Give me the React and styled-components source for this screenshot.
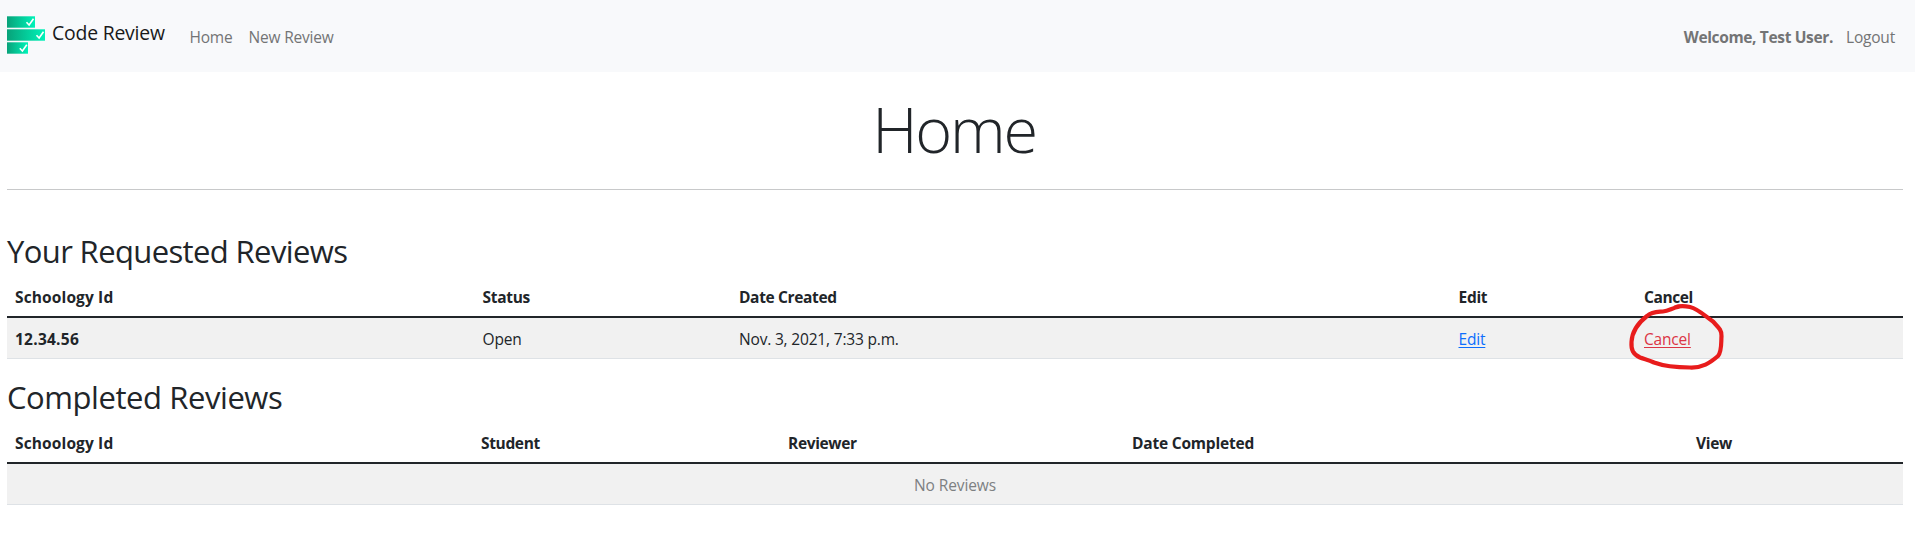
import React from "react";
import styled, { createGlobalStyle } from "styled-components";

const GlobalStyle = createGlobalStyle`
  *, *::before, *::after { box-sizing: border-box; }
  body {
    margin: 0;
    background: #fff;
    color: #212529;
    font-family: "Open Sans", "Noto Sans", sans-serif;
    font-size: 15.5px;
    line-height: 24px;
    letter-spacing: -0.1px;
  }
`;

const Navbar = styled.nav`
  display: flex;
  align-items: center;
  height: 72px;
  padding: 0 20px 0 7px;
  background: #f8f9fb;
`;

const Brand = styled.a`
  display: flex;
  align-items: center;
  gap: 7px;
  width: 175px;
  padding-bottom: 5px;
  color: #18191a;
  font-size: 19.4px;
  line-height: 30px;
  letter-spacing: -0.2px;
  text-decoration: none;
  white-space: nowrap;
`;

const BrandName = styled.span`
  padding-bottom: 2px;
`;

const LogoSvg = styled.svg`
  display: block;
  margin-top: 2px;
`;

const NavLinks = styled.div`
  display: flex;
  gap: ${(p) => p.$gap}px;
  margin-left: ${(p) => (p.$end ? "auto" : "7.5px")};
  padding-top: 1px;
  color: #737475;
`;

const NavLink = styled.a`
  color: inherit;
  text-decoration: none;
  letter-spacing: -0.2px;
`;

const Welcome = styled.strong`
  font-weight: 700;
  letter-spacing: -0.35px;
`;

const Main = styled.main`
  padding: 0 12px 0 7px;
`;

const Title = styled.h1`
  margin: 0;
  padding: 18px 2px 0 0;
  height: 118px;
  font-size: 63px;
  line-height: 77px;
  font-weight: 300;
  letter-spacing: -2.2px;
  text-align: center;
  border-bottom: 1px solid #c8c9ca;
`;

const Section = styled.section`
  padding-top: ${(p) => p.$top}px;
`;

const Heading = styled.h2`
  margin: 0;
  padding: 3px 0 5px;
  font-size: 31px;
  line-height: 39px;
  font-weight: 400;
  letter-spacing: ${(p) => p.$tracking || "-0.62px"};
`;

const Table = styled.div`
  display: flex;
  flex-direction: column;
`;

const Row = styled.div`
  display: grid;
  grid-template-columns: ${(p) => p.$columns};
  height: ${(p) => (p.$head ? 42 : 41)}px;
  padding-top: 9px;
  background: ${(p) => (p.$head ? "transparent" : "#f1f1f1")};
  border-bottom: ${(p) => (p.$head ? "2px solid #212529" : "1px solid #dee2e6")};
`;

const Cell = styled.div`
  padding: 0 8px;
  white-space: nowrap;
  font-weight: ${(p) => (p.$bold ? 700 : 400)};
  letter-spacing: ${(p) => p.$tracking || (p.$bold ? "-0.3px" : "-0.18px")};
`;

const EmptyCell = styled.div`
  grid-column: 1 / -1;
  text-align: center;
  color: #7d8082;
`;

const ActionLink = styled.a`
  position: relative;
  color: ${(p) => (p.$danger ? "#dc3545" : "#0d6efd")};
  text-decoration: underline;
  text-decoration-thickness: 1px;
  text-underline-offset: 2px;
`;

const Marker = styled.svg`
  position: absolute;
  left: -15.5px;
  top: -25.5px;
  overflow: visible;
  pointer-events: none;
`;

const requestedColumns = "467.5px 256.5px 719.5px 185.5px 1fr";
const completedColumns = "466px 307px 344px 564px 1fr";

const requestedHead = [
  { label: "Schoology Id", tracking: "0.13px" },
  { label: "Status" },
  { label: "Date Created", tracking: "-0.35px" },
  { label: "Edit" },
  { label: "Cancel", tracking: "-0.4px" },
];

const completedHead = [
  { label: "Schoology Id", tracking: "0.13px" },
  { label: "Student", tracking: "-0.35px" },
  { label: "Reviewer", tracking: "-0.35px" },
  { label: "Date Completed", tracking: "-0.2px" },
  { label: "View" },
];

function Logo() {
  return (
    <LogoSvg width="38" height="38" viewBox="0 0 38 38">
      <defs>
        <linearGradient id="bar" x1="0" x2="1">
          <stop offset="0" stopColor="#08a279" />
          <stop offset="1" stopColor="#00f3b9" />
        </linearGradient>
      </defs>
      <rect y="0.3" width="28" height="11.4" fill="url(#bar)" />
      <rect y="13.3" width="38" height="11.4" fill="url(#bar)" />
      <rect y="26.3" width="21" height="11.4" fill="url(#bar)" />
      <g fill="none" stroke="#fff" strokeWidth="1.6">
        <path d="M19.5 6.2l2.6 2.8 4.4-6.2" />
        <path d="M29.5 19.2l2.6 2.8 4.4-6.2" />
        <path d="M12.8 32.2l2.6 2.8 4.4-6.2" />
      </g>
    </LogoSvg>
  );
}

function CircleMark() {
  return (
    <Marker width="94" height="66" viewBox="0 0 94 66">
      <path
        d="M50 3.8C43 5 40 8 34 8.5C28 9 23 8.5 18 13C9 20 3 29 2.5 39C2 47 4 51 11 54.5C15 56 20 57 25 59.5C36 63.5 51 64.5 61 64.5C73 65 81 60 89 53C93 48 92 40 92.5 33C93 27 89 24 84 18.5C75 12 69 6 61 4C55 2.8 50 2.8 46 4.5"
        fill="none"
        stroke="#e81c1c"
        strokeWidth="4.2"
        strokeLinecap="round"
        strokeLinejoin="round"
      />
    </Marker>
  );
}

function HeadRow({ columns, cells }) {
  return (
    <Row $head $columns={columns}>
      {cells.map(({ label, tracking }) => (
        <Cell key={label} $bold $tracking={tracking}>{label}</Cell>
      ))}
    </Row>
  );
}

export default function App() {
  return (
    <>
      <GlobalStyle />
      <Navbar>
        <Brand>
          <Logo />
          <BrandName>Code Review</BrandName>
        </Brand>
        <NavLinks $gap={16}>
          <NavLink>Home</NavLink>
          <NavLink>New Review</NavLink>
        </NavLinks>
        <NavLinks $end $gap={13}>
          <Welcome>Welcome, Test User.</Welcome>
          <NavLink>Logout</NavLink>
        </NavLinks>
      </Navbar>
      <Main>
        <Title>Home</Title>
        <Section $top={39}>
          <Heading>Your Requested Reviews</Heading>
          <Table>
            <HeadRow columns={requestedColumns} cells={requestedHead} />
            <Row $columns={requestedColumns}>
              <Cell $bold $tracking="0.25px">12.34.56</Cell>
              <Cell>Open</Cell>
              <Cell>Nov. 3, 2021, 7:33 p.m.</Cell>
              <Cell><ActionLink>Edit</ActionLink></Cell>
              <Cell>
                <ActionLink $danger>
                  Cancel
                  <CircleMark />
                </ActionLink>
              </Cell>
            </Row>
          </Table>
        </Section>
        <Section $top={16}>
          <Heading $tracking="-0.43px">Completed Reviews</Heading>
          <Table>
            <HeadRow columns={completedColumns} cells={completedHead} />
            <Row $columns={completedColumns}>
              <EmptyCell>No Reviews</EmptyCell>
            </Row>
          </Table>
        </Section>
      </Main>
    </>
  );
}
